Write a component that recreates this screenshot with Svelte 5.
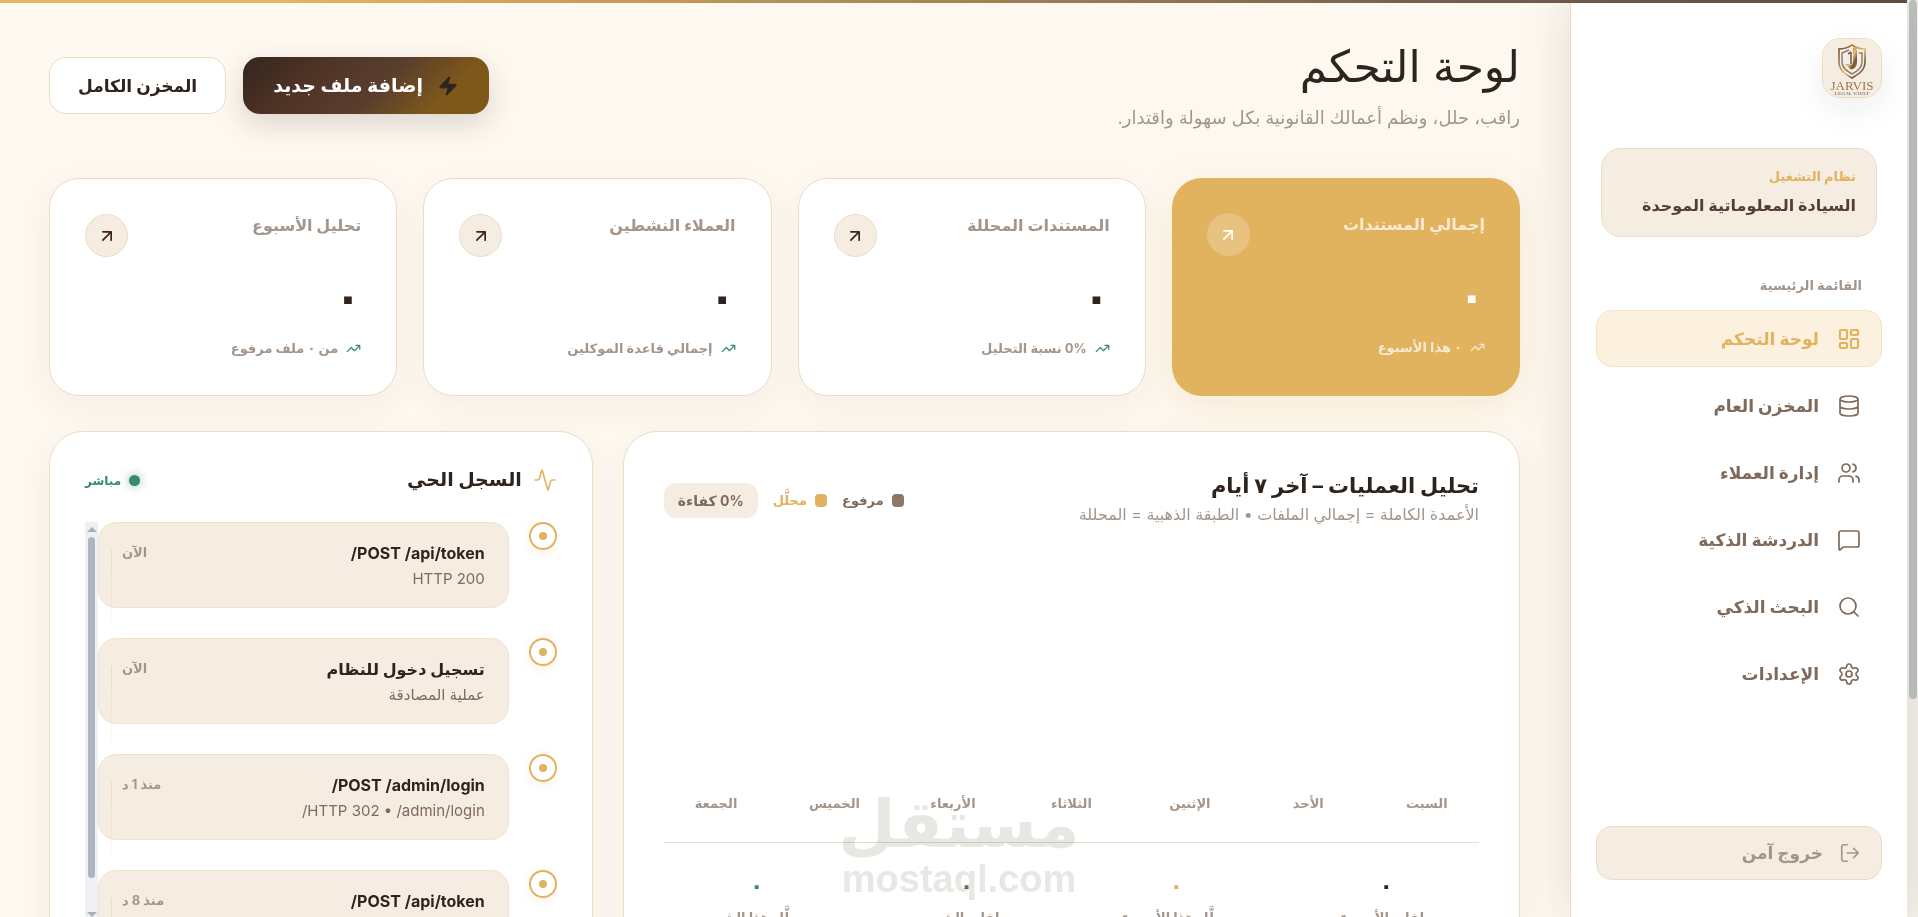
<script lang="ts">
  type IconName = keyof typeof icons;

  const icons = {
    dashboard: 'M4 3h5a1 1 0 0 1 1 1v7a1 1 0 0 1-1 1H4a1 1 0 0 1-1-1V4a1 1 0 0 1 1-1z M15 3h5a1 1 0 0 1 1 1v3a1 1 0 0 1-1 1h-5a1 1 0 0 1-1-1V4a1 1 0 0 1 1-1z M15 12h5a1 1 0 0 1 1 1v7a1 1 0 0 1-1 1h-5a1 1 0 0 1-1-1v-7a1 1 0 0 1 1-1z M4 16h5a1 1 0 0 1 1 1v3a1 1 0 0 1-1 1H4a1 1 0 0 1-1-1v-3a1 1 0 0 1 1-1z',
    database: 'M3 5a9 3 0 1 0 18 0a9 3 0 1 0-18 0 M3 5v14a9 3 0 0 0 18 0V5 M3 12a9 3 0 0 0 18 0',
    users: 'M16 21v-2a4 4 0 0 0-4-4H6a4 4 0 0 0-4 4v2 M5 7a4 4 0 1 0 8 0a4 4 0 1 0-8 0 M22 21v-2a4 4 0 0 0-3-3.87 M16 3.13a4 4 0 0 1 0 7.75',
    message: 'M22 17a2 2 0 0 1-2 2H6.828a2 2 0 0 0-1.414.586l-2.202 2.202A.71.71 0 0 1 2 21.286V5a2 2 0 0 1 2-2h16a2 2 0 0 1 2 2z',
    search: 'M3 11a8 8 0 1 0 16 0a8 8 0 1 0-16 0 M21 21l-4.34-4.34',
    settings: 'M9.671 4.136a2.34 2.34 0 0 1 4.659 0 2.34 2.34 0 0 0 3.319 1.915 2.34 2.34 0 0 1 2.33 4.033 2.34 2.34 0 0 0 0 3.831 2.34 2.34 0 0 1-2.33 4.033 2.34 2.34 0 0 0-3.319 1.915 2.34 2.34 0 0 1-4.659 0 2.34 2.34 0 0 0-3.32-1.915 2.34 2.34 0 0 1-2.33-4.033 2.34 2.34 0 0 0 0-3.831A2.34 2.34 0 0 1 6.35 6.051a2.34 2.34 0 0 0 3.319-1.915 M9 12a3 3 0 1 0 6 0a3 3 0 1 0-6 0',
    logout: 'M16 17l5-5-5-5 M21 12H9 M9 21H5a2 2 0 0 1-2-2V5a2 2 0 0 1 2-2h4',
    zap: 'M4 14a1 1 0 0 1-.78-1.63l9.9-10.2a.5.5 0 0 1 .86.46l-1.92 6.02A1 1 0 0 0 13 10h7a1 1 0 0 1 .78 1.63l-9.9 10.2a.5.5 0 0 1-.86-.46l1.92-6.02A1 1 0 0 0 11 14z',
    arrow: 'M7 7h10v10 M7 17L17 7',
    trend: 'M16 7h6v6 M22 7l-8.5 8.5-5-5L2 17',
    activity: 'M22 12h-2.48a2 2 0 0 0-1.93 1.46l-2.35 8.36a.25.25 0 0 1-.48 0L9.24 2.18a.25.25 0 0 0-.48 0l-2.35 8.36A2 2 0 0 1 4.49 12H2',
  };

  const nav: { id: string; label: string; icon: IconName }[] = [
    { id: 'dashboard', label: 'لوحة التحكم', icon: 'dashboard' },
    { id: 'vault', label: 'المخزن العام', icon: 'database' },
    { id: 'clients', label: 'إدارة العملاء', icon: 'users' },
    { id: 'chat', label: 'الدردشة الذكية', icon: 'message' },
    { id: 'search', label: 'البحث الذكي', icon: 'search' },
    { id: 'settings', label: 'الإعدادات', icon: 'settings' },
  ];

  const stats = [
    { title: 'إجمالي المستندات', value: '٠', note: '٠ هذا الأسبوع' },
    { title: 'المستندات المحللة', value: '٠', note: '0% نسبة التحليل' },
    { title: 'العملاء النشطين', value: '٠', note: 'إجمالي قاعدة الموكلين' },
    { title: 'تحليل الأسبوع', value: '٠', note: 'من ٠ ملف مرفوع' },
  ];

  const days = ['السبت', 'الأحد', 'الإثنين', 'الثلاثاء', 'الأربعاء', 'الخميس', 'الجمعة'];

  const totals = [
    { label: 'ملفات الأسبوع', value: '٠', tone: 'dark' },
    { label: 'محلَّل هذا الأسبوع', value: '٠', tone: 'gold' },
    { label: 'ملفات الشهر', value: '٠', tone: 'brown' },
    { label: 'محلَّل هذا الشهر', value: '٠', tone: 'green' },
  ];

  const log = [
    { title: 'POST /api/token/', detail: 'HTTP 200', time: 'الآن' },
    { title: 'تسجيل دخول للنظام', detail: 'عملية المصادقة', time: 'الآن' },
    { title: 'POST /admin/login/', detail: 'HTTP 302 • /admin/login/', time: 'منذ 1 د' },
    { title: 'POST /api/token/', detail: 'HTTP 200', time: 'منذ 8 د' },
  ];

  let current = $state('dashboard');
</script>

{#snippet icon(name: IconName, size: number, weight: number)}
  <svg
    class="icon"
    width={size}
    height={size}
    viewBox="0 0 24 24"
    fill={name === 'zap' ? 'currentColor' : 'none'}
    stroke="currentColor"
    stroke-width={weight}
    stroke-linecap="round"
    stroke-linejoin="round"
    aria-hidden="true"
  >
    <path d={icons[name]} />
  </svg>
{/snippet}

<div class="app" dir="rtl">
  <div class="page-scroll" aria-hidden="true"><div class="page-thumb"></div></div>

  <aside class="sidebar">
    <div class="logo">
      <svg width="58" height="58" viewBox="0 0 58 58" role="img" aria-label="Jarvis Legal Vault">
        <defs>
          <linearGradient id="metal" x1="0" y1="0" x2="1" y2="1">
            <stop offset="0" stop-color="#5b4a3f" />
            <stop offset="0.35" stop-color="#c08a45" />
            <stop offset="0.55" stop-color="#e3bd78" />
            <stop offset="0.75" stop-color="#74543a" />
            <stop offset="1" stop-color="#b17b38" />
          </linearGradient>
        </defs>
        <path d="M29 6Q35 10 42 10V23C42 31 36 35 29 39C22 35 16 31 16 23V10Q23 10 29 6Z" fill="none" stroke="url(#metal)" stroke-width="1.6" />
        <path d="M26 11L19 14V23C19 29 24 32 29 35C35 32 39 29 39 23V14H36" fill="none" stroke="#8d7d74" stroke-width="1.5" />
        <path d="M34 7V23C34 28 31 31 27 30L22 25H26C29 27 30 25 30 22V9Z" fill="url(#metal)" />
        <path d="M28 13V25M25 15L28 13" fill="none" stroke="#75604f" stroke-width="1.6" />
        <text class="logo-name" x="29" y="51" text-anchor="middle">JARVIS</text>
        <text class="logo-sub" x="29" y="56" text-anchor="middle">LEGAL VAULT</text>
      </svg>
    </div>

    <div class="system">
      <span class="system-label">نظام التشغيل</span>
      <strong class="system-name">السيادة المعلوماتية الموحدة</strong>
    </div>

    <h2 class="nav-heading">القائمة الرئيسية</h2>
    <nav class="nav" aria-label="القائمة الرئيسية">
      {#each nav as item (item.id)}
        <a
          href="#{item.id}"
          class="nav-item"
          class:active={item.id === current}
          aria-current={item.id === current ? 'page' : undefined}
          onclick={() => (current = item.id)}
        >
          {@render icon(item.icon, 24, item.id === current ? 2.2 : 1.7)}
          <span>{item.label}</span>
        </a>
      {/each}
    </nav>

    <button class="logout">
      {@render icon('logout', 22, 1.8)}
      <span>خروج آمن</span>
    </button>
  </aside>

  <main class="main">
    <header class="header">
      <div>
        <h1>لوحة التحكم</h1>
        <p class="subtitle">راقب، حلل، ونظم أعمالك القانونية بكل سهولة واقتدار.</p>
      </div>
      <div class="actions">
        <button class="btn primary">
          {@render icon('zap', 22, 1)}
          <span>إضافة ملف جديد</span>
        </button>
        <button class="btn">المخزن الكامل</button>
      </div>
    </header>

    <section class="stats">
      {#each stats as stat, i}
        <article class="stat" class:featured={i === 0}>
          <div class="stat-top">
            <h3>{stat.title}</h3>
            <button class="stat-open" aria-label={stat.title}>{@render icon('arrow', 20, 2)}</button>
          </div>
          <div class="stat-value">{stat.value}</div>
          <div class="stat-note">
            {@render icon('trend', 15, 2)}
            <span>{stat.note}</span>
          </div>
        </article>
      {/each}
    </section>

    <section class="panels">
      <article class="panel chart">
        <header class="chart-head">
          <div>
            <h2>تحليل العمليات – آخر ٧ أيام</h2>
            <p>الأعمدة الكاملة = إجمالي الملفات • الطبقة الذهبية = المحللة</p>
          </div>
          <div class="legend">
            <span class="key"><i class="swatch"></i>مرفوع</span>
            <span class="key gold"><i class="swatch"></i>محلَّل</span>
            <span class="chip">0% كفاءة</span>
          </div>
        </header>
        <div class="plot">
          {#each days as day}
            <div class="day">{day}</div>
          {/each}
        </div>
        <div class="totals">
          {#each totals as total}
            <div class="total">
              <strong class={total.tone}>{total.value}</strong>
              <span>{total.label}</span>
            </div>
          {/each}
        </div>
      </article>

      <article class="panel log">
        <header class="log-head">
          <h2>{@render icon('activity', 24, 1.6)}<span>السجل الحي</span></h2>
          <span class="live"><i></i>مباشر</span>
        </header>
        <div class="log-body">
          <ol class="events">
            {#each log as event}
              <li class="event">
                <span class="ring"></span>
                <div class="bubble">
                  <div>
                    <h3>{event.title}</h3>
                    <p>{event.detail}</p>
                  </div>
                  <time>{event.time}</time>
                </div>
              </li>
            {/each}
          </ol>
          <div class="track" aria-hidden="true">
            <span class="up"></span>
            <span class="thumb"></span>
            <span class="down"></span>
          </div>
        </div>
      </article>
    </section>
  </main>

  <div class="watermark" aria-hidden="true">
    <span class="wm-ar">مستقل</span>
    <span class="wm-en" dir="ltr">mostaql.com</span>
  </div>
</div>

<style>
  :global(body) {
    background: #fdf8f0;
  }

  .app {
    --gold: #e2b35f;
    --sand: #f6ede2;
    --line: #eddcc4;
    --ink: #2f231e;
    --brown: #7f6a5b;
    --muted: #a4958a;
    --green: #348c68;
    position: relative;
    display: flex;
    height: 100vh;
    overflow: hidden;
    box-sizing: border-box;
    background: #fdf8f0;
    color: var(--ink);
    font-family: Inter, 'DejaVu Sans', sans-serif;
  }

  .app::before {
    content: '';
    position: absolute;
    z-index: 3;
    inset: 0 0 auto 0;
    height: 3px;
    margin-right: 11px;
    background: linear-gradient(90deg, #e6b45e 15%, #75604f 75%, #604a3c);
  }

  .app * {
    box-sizing: border-box;
  }

  h1, h2, h3, p, ol {
    margin: 0;
    padding: 0;
  }

  button {
    font: inherit;
    cursor: pointer;
  }

  .icon {
    display: block;
    flex-shrink: 0;
  }

  .page-scroll {
    flex: 0 0 11px;
    padding: 0 1px 0 2px;
    background: #f5f1ea;
  }

  .page-thumb {
    height: 699px;
    max-height: 80%;
    border-radius: 4px;
    background: #bfc3c3;
  }

  /* Sidebar */
  .sidebar {
    flex: 0 0 337px;
    display: flex;
    flex-direction: column;
    padding: 38px 25px 37px;
    border-left: 1px solid var(--line);
    background: #fff;
    box-shadow: 0 0 50px rgba(47, 35, 30, 0.13);
    z-index: 1;
  }

  .logo {
    width: 60px;
    height: 60px;
    flex-shrink: 0;
    overflow: hidden;
    border: 1px solid var(--line);
    border-radius: 18px;
    background: var(--sand);
    box-shadow: 0 12px 32px rgba(47, 35, 30, 0.07);
  }

  .logo-name {
    font: 13px 'Liberation Serif', serif;
    fill: #a0734a;
  }

  .logo-sub {
    font: bold 5px 'Liberation Serif', serif;
    fill: #927d6c;
  }

  .system {
    display: flex;
    flex-direction: column;
    gap: 4px;
    margin: 50px 5px 0;
    padding: 15px 20px 18px;
    border: 1px solid var(--line);
    border-radius: 20px;
    background: var(--sand);
  }

  .system-label {
    font-size: 13px;
    line-height: 24px;
    font-weight: 700;
    color: var(--gold);
  }

  .system-name {
    font-size: 16px;
    line-height: 26px;
    color: #543f31;
    white-space: nowrap;
  }

  .nav-heading {
    margin: 36px 20px 13px;
    font-size: 13px;
    line-height: 24px;
    color: var(--muted);
  }

  .nav {
    display: flex;
    flex-direction: column;
    gap: 10px;
  }

  .nav-item {
    display: flex;
    align-items: center;
    gap: 18px;
    height: 57px;
    padding: 0 20px;
    border: 1px solid transparent;
    border-radius: 16px;
    color: var(--brown);
    font-size: 17px;
    font-weight: 700;
    text-decoration: none;
  }

  .nav-item.active {
    border-color: #f6e3bf;
    background: #fcf1df;
    color: var(--gold);
  }

  .logout {
    display: flex;
    align-items: center;
    gap: 16px;
    height: 54px;
    margin-top: auto;
    padding: 0 20px;
    border: 1px solid var(--line);
    border-radius: 16px;
    background: var(--sand);
    color: var(--muted);
    font-size: 17px;
    font-weight: 700;
  }

  /* Main column */
  .main {
    flex: 1;
    min-width: 0;
    padding: 38px 50px 0 49px;
  }

  .header {
    display: flex;
    align-items: center;
    justify-content: space-between;
    height: 95px;
    margin-bottom: 45px;
  }

  h1 {
    margin-bottom: 8px;
    font-size: 44px;
    line-height: 56px;
    font-weight: 400;
  }

  .subtitle {
    font-size: 18px;
    line-height: 31px;
    color: var(--muted);
  }

  .actions {
    display: flex;
    gap: 17px;
  }

  .btn {
    display: flex;
    align-items: center;
    gap: 14px;
    height: 57px;
    padding: 0 28px;
    border: 1px solid var(--line);
    border-radius: 17px;
    background: #fff;
    color: var(--ink);
    font-size: 17px;
    font-weight: 700;
    white-space: nowrap;
  }

  .btn.primary {
    padding: 0 30px;
    border: 0;
    background: linear-gradient(135deg, #33261f, #4d3124 25%, #5a3e2d 55%, #7e581b 80%);
    color: #fff;
    font-size: 19px;
    box-shadow: 0 10px 28px rgba(47, 35, 30, 0.16);
  }

  .btn.primary .icon {
    color: var(--ink);
  }

  .stats {
    display: grid;
    grid-template-columns: repeat(4, 1fr);
    gap: 26px;
    margin-bottom: 35px;
  }

  .stat {
    padding: 35px 35px 36px;
    border: 1px solid var(--line);
    border-radius: 30px;
    background: #fff;
    box-shadow: 0 10px 32px rgba(120, 90, 40, 0.06);
  }

  .stat-top {
    display: flex;
    justify-content: space-between;
  }

  .stat h3 {
    font-size: 16px;
    line-height: 22px;
    color: var(--muted);
  }

  .stat-open {
    display: grid;
    place-items: center;
    width: 43px;
    height: 43px;
    padding: 0;
    border: 1px solid var(--line);
    border-radius: 50%;
    background: var(--sand);
    color: #3f2419;
  }

  .stat-value {
    margin: 12px 0;
    font-size: 44px;
    line-height: 56px;
    font-weight: 700;
  }

  .stat-note {
    display: flex;
    align-items: center;
    gap: 8px;
    font-size: 13px;
    line-height: 22px;
    font-weight: 700;
    color: var(--muted);
  }

  .stat-note .icon {
    color: var(--green);
  }

  .stat.featured {
    border: 0;
    background: var(--gold);
    color: #fff;
    box-shadow: 0 10px 36px rgba(226, 179, 95, 0.2);
  }

  .stat.featured h3,
  .stat.featured .stat-note,
  .stat.featured .stat-note .icon {
    color: #f8ead1;
  }

  .stat.featured .stat-open {
    border: 0;
    background: #e8c280;
    color: #fff;
  }

  .panels {
    display: grid;
    grid-template-columns: 1.65fr 1fr;
    gap: 30px;
  }

  .panel {
    min-width: 0;
    border: 1px solid var(--line);
    border-radius: 34px;
    background: #fff;
    box-shadow: 0 10px 32px rgba(120, 90, 40, 0.06);
  }

  .chart {
    padding: 40px;
  }

  .chart-head {
    display: flex;
    align-items: center;
    justify-content: space-between;
  }

  .chart-head h2 {
    font-size: 21px;
    line-height: 28px;
  }

  .chart-head p {
    font-size: 16px;
    line-height: 28px;
    color: var(--muted);
  }

  .legend {
    display: flex;
    align-items: center;
    gap: 15px;
    font-size: 13px;
    font-weight: 700;
    color: var(--brown);
  }

  .key {
    display: flex;
    align-items: center;
    gap: 8px;
  }

  .key.gold {
    color: var(--gold);
  }

  .swatch {
    width: 12px;
    height: 13px;
    border-radius: 4px;
    background: #8f7768;
  }

  .gold .swatch {
    background: var(--gold);
  }

  .chip {
    padding: 0 14px;
    border-radius: 12px;
    background: var(--sand);
    font-size: 14px;
    line-height: 35px;
  }

  .plot {
    display: grid;
    grid-template-columns: repeat(7, 1fr);
    align-items: end;
    gap: 14px;
    height: 315px;
    padding-bottom: 29px;
    border-bottom: 1px solid var(--line);
  }

  .day {
    font-size: 13px;
    line-height: 20px;
    font-weight: 700;
    text-align: center;
    color: var(--muted);
  }

  .totals {
    display: grid;
    grid-template-columns: repeat(4, 1fr);
    gap: 24px;
    padding-top: 24px;
  }

  .total {
    display: flex;
    flex-direction: column;
    align-items: center;
    font-size: 13px;
    line-height: 28px;
    font-weight: 700;
    color: var(--muted);
  }

  .total strong {
    font-size: 22px;
    line-height: 36px;
  }

  .total .dark {
    color: var(--ink);
  }

  .total .gold {
    color: var(--gold);
  }

  .total .brown {
    color: var(--brown);
  }

  .total .green {
    color: var(--green);
  }

  /* Live log */
  .log {
    padding: 33px 35px;
  }

  .log-head {
    display: flex;
    align-items: center;
    justify-content: space-between;
    margin-bottom: 27px;
  }

  .log-head h2 {
    display: flex;
    align-items: center;
    gap: 11px;
    font-size: 19px;
    line-height: 30px;
  }

  .log-head .icon {
    color: var(--gold);
  }

  .live {
    display: flex;
    align-items: center;
    gap: 8px;
    font-size: 12px;
    font-weight: 700;
    color: var(--green);
  }

  .live i {
    width: 11px;
    height: 11px;
    border-radius: 50%;
    background: var(--green);
    box-shadow: 0 0 10px rgba(52, 140, 104, 0.6);
  }

  .log-body {
    display: flex;
    height: 400px;
    overflow: hidden;
  }

  .events {
    flex: 1;
    min-width: 0;
    display: flex;
    flex-direction: column;
    gap: 30px;
    list-style: none;
  }

  .event {
    position: relative;
    display: flex;
    gap: 20px;
  }

  .event::after {
    content: '';
    position: absolute;
    top: 28px;
    bottom: -26px;
    left: 13px;
    width: 1px;
    background: linear-gradient(var(--line), transparent);
  }

  .ring {
    display: grid;
    place-items: center;
    flex: 0 0 28px;
    height: 28px;
    border: 2px solid var(--gold);
    border-radius: 50%;
    box-shadow: 0 2px 12px rgba(226, 179, 95, 0.2);
  }

  .ring::after {
    content: '';
    width: 8px;
    height: 8px;
    border-radius: 50%;
    background: var(--gold);
  }

  .bubble {
    flex: 1;
    min-width: 0;
    display: flex;
    justify-content: space-between;
    padding: 17px 23px 15px;
    border: 1px solid #f3e2c8;
    border-radius: 18px;
    background: var(--sand);
  }

  .bubble h3 {
    font-size: 16px;
    line-height: 26px;
  }

  .bubble p {
    font-size: 15px;
    line-height: 26px;
    color: var(--brown);
  }

  .bubble time {
    font-size: 13px;
    line-height: 24px;
    font-weight: 700;
    color: var(--muted);
  }

  .track {
    flex: 0 0 13px;
    display: flex;
    flex-direction: column;
    align-items: center;
    gap: 5px;
    padding: 5px 0;
    background: #eef0f3;
  }

  .up,
  .down {
    border: 5px solid transparent;
    border-top: 0;
    border-bottom-color: #a9b1bd;
  }

  .down {
    margin-top: auto;
    border-top: 5px solid #a9b1bd;
    border-bottom: 0;
  }

  .thumb {
    width: 7px;
    height: 341px;
    border-radius: 4px;
    background: #adb5c0;
  }

  .watermark {
    position: absolute;
    z-index: 2;
    left: 50%;
    bottom: 16px;
    display: flex;
    flex-direction: column;
    align-items: center;
    transform: translateX(-50%);
    color: #e7e7e3;
    mix-blend-mode: multiply;
    pointer-events: none;
  }

  .wm-ar {
    font-size: 66px;
    line-height: 68px;
    font-weight: 700;
  }

  .wm-en {
    font: bold 38px/44px 'Liberation Sans', sans-serif;
  }
</style>
